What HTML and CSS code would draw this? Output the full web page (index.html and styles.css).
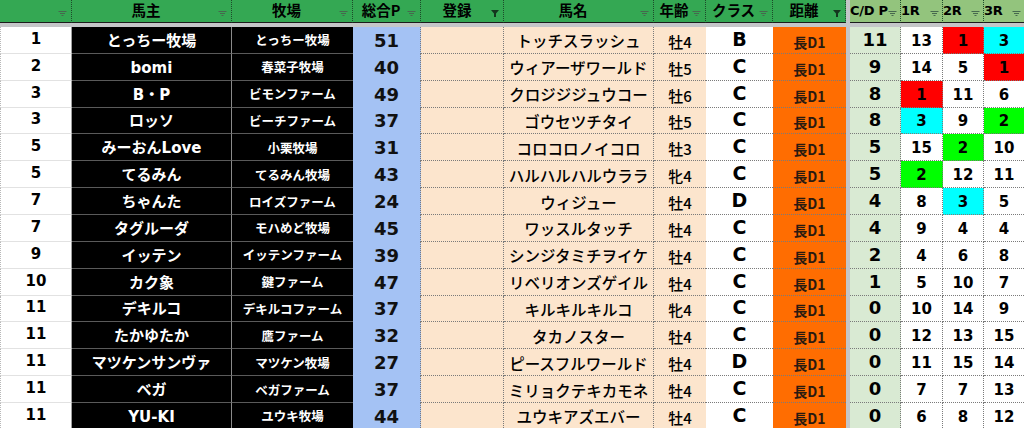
FILE: index.html
```html
<!DOCTYPE html>
<html lang="ja">
<head>
<meta charset="utf-8">
<title>ランキング</title>
<link rel="stylesheet" href="styles.css">
</head>
<body>
<div class="sheet">
  <div class="row head">
    <div class="h c-rank"><span></span><svg class="flt" viewBox="0 0 8 6"><path d="M0 0.5H8M1.5 2.5H6.5M3 4.5H5"/></svg></div>
    <div class="h"><span>馬主</span><svg class="flt" viewBox="0 0 8 6"><path d="M0 0.5H8M1.5 2.5H6.5M3 4.5H5"/></svg></div>
    <div class="h"><span>牧場</span><svg class="flt" viewBox="0 0 8 6"><path d="M0 0.5H8M1.5 2.5H6.5M3 4.5H5"/></svg></div>
    <div class="h"><span>総合P</span><svg class="flt" viewBox="0 0 8 6"><path d="M0 0.5H8M1.5 2.5H6.5M3 4.5H5"/></svg></div>
    <div class="h"><span>登録</span><svg class="flt on" viewBox="0 0 8 7"><path d="M0 0H8L5 3.5V7H3V3.5Z"/></svg></div>
    <div class="h"><span>馬名</span><svg class="flt" viewBox="0 0 8 6"><path d="M0 0.5H8M1.5 2.5H6.5M3 4.5H5"/></svg></div>
    <div class="h"><span>年齢</span><svg class="flt" viewBox="0 0 8 6"><path d="M0 0.5H8M1.5 2.5H6.5M3 4.5H5"/></svg></div>
    <div class="h"><span>クラス</span><svg class="flt" viewBox="0 0 8 6"><path d="M0 0.5H8M1.5 2.5H6.5M3 4.5H5"/></svg></div>
    <div class="h"><span>距離</span><svg class="flt on" viewBox="0 0 8 7"><path d="M0 0H8L5 3.5V7H3V3.5Z"/></svg></div>
    <div class="sep"></div>
    <div class="h lt sm"><span>C/D P</span><svg class="flt" viewBox="0 0 8 6"><path d="M0 0.5H8M1.5 2.5H6.5M3 4.5H5"/></svg></div>
    <div class="h lt sm"><span>1R</span><svg class="flt" viewBox="0 0 8 6"><path d="M0 0.5H8M1.5 2.5H6.5M3 4.5H5"/></svg></div>
    <div class="h lt sm"><span>2R</span><svg class="flt" viewBox="0 0 8 6"><path d="M0 0.5H8M1.5 2.5H6.5M3 4.5H5"/></svg></div>
    <div class="h lt sm last"><span>3R</span><svg class="flt" viewBox="0 0 8 6"><path d="M0 0.5H8M1.5 2.5H6.5M3 4.5H5"/></svg></div>
  </div>
  <div class="band"></div>

  <div class="row"><div class="c rank">1</div><div class="c own">とっちー牧場</div><div class="c farm">とっちー牧場</div><div class="c pt">51</div><div class="c reg"></div><div class="c horse">トッチスラッシュ</div><div class="c age">牡4</div><div class="c cls">B</div><div class="c dist">長D1</div><div class="sep"></div><div class="c cdp">11</div><div class="c r">13</div><div class="c r red">1</div><div class="c r cyan last">3</div></div>
  <div class="row"><div class="c rank">2</div><div class="c own">bomi</div><div class="c farm">春菜子牧場</div><div class="c pt">40</div><div class="c reg"></div><div class="c horse">ウィアーザワールド</div><div class="c age">牡5</div><div class="c cls">C</div><div class="c dist">長D1</div><div class="sep"></div><div class="c cdp">9</div><div class="c r">14</div><div class="c r">5</div><div class="c r red last">1</div></div>
  <div class="row"><div class="c rank">3</div><div class="c own">B・P</div><div class="c farm">ビモンファーム</div><div class="c pt">49</div><div class="c reg"></div><div class="c horse">クロジジジュウコー</div><div class="c age">牡6</div><div class="c cls">C</div><div class="c dist">長D1</div><div class="sep"></div><div class="c cdp">8</div><div class="c r red">1</div><div class="c r">11</div><div class="c r last">6</div></div>
  <div class="row"><div class="c rank">3</div><div class="c own">ロッソ</div><div class="c farm">ビーチファーム</div><div class="c pt">37</div><div class="c reg"></div><div class="c horse">ゴウセツチタイ</div><div class="c age">牡5</div><div class="c cls">C</div><div class="c dist">長D1</div><div class="sep"></div><div class="c cdp">8</div><div class="c r cyan">3</div><div class="c r">9</div><div class="c r green last">2</div></div>
  <div class="row"><div class="c rank">5</div><div class="c own">みーおんLove</div><div class="c farm">小栗牧場</div><div class="c pt">31</div><div class="c reg"></div><div class="c horse">コロコロノイコロ</div><div class="c age">牡3</div><div class="c cls">C</div><div class="c dist">長D1</div><div class="sep"></div><div class="c cdp">5</div><div class="c r">15</div><div class="c r green">2</div><div class="c r last">10</div></div>
  <div class="row"><div class="c rank">5</div><div class="c own">てるみん</div><div class="c farm">てるみん牧場</div><div class="c pt">43</div><div class="c reg"></div><div class="c horse">ハルハルハルウララ</div><div class="c age">牝4</div><div class="c cls">C</div><div class="c dist">長D1</div><div class="sep"></div><div class="c cdp">5</div><div class="c r green">2</div><div class="c r">12</div><div class="c r last">11</div></div>
  <div class="row"><div class="c rank">7</div><div class="c own">ちゃんた</div><div class="c farm">ロイズファーム</div><div class="c pt">24</div><div class="c reg"></div><div class="c horse">ウィジュー</div><div class="c age">牡4</div><div class="c cls">D</div><div class="c dist">長D1</div><div class="sep"></div><div class="c cdp">4</div><div class="c r">8</div><div class="c r cyan">3</div><div class="c r last">5</div></div>
  <div class="row"><div class="c rank">7</div><div class="c own">タグルーダ</div><div class="c farm">モハめど牧場</div><div class="c pt">45</div><div class="c reg"></div><div class="c horse">ワッスルタッチ</div><div class="c age">牡4</div><div class="c cls">C</div><div class="c dist">長D1</div><div class="sep"></div><div class="c cdp">4</div><div class="c r">9</div><div class="c r">4</div><div class="c r last">4</div></div>
  <div class="row"><div class="c rank">9</div><div class="c own">イッテン</div><div class="c farm">イッテンファーム</div><div class="c pt">39</div><div class="c reg"></div><div class="c horse">シンジタミチヲイケ</div><div class="c age">牡4</div><div class="c cls">C</div><div class="c dist">長D1</div><div class="sep"></div><div class="c cdp">2</div><div class="c r">4</div><div class="c r">6</div><div class="c r last">8</div></div>
  <div class="row"><div class="c rank">10</div><div class="c own">カク象</div><div class="c farm">鍵ファーム</div><div class="c pt">47</div><div class="c reg"></div><div class="c horse">リベリオンズゲイル</div><div class="c age">牡4</div><div class="c cls">C</div><div class="c dist">長D1</div><div class="sep"></div><div class="c cdp">1</div><div class="c r">5</div><div class="c r">10</div><div class="c r last">7</div></div>
  <div class="row"><div class="c rank">11</div><div class="c own">デキルコ</div><div class="c farm">デキルコファーム</div><div class="c pt">37</div><div class="c reg"></div><div class="c horse">キルキルキルコ</div><div class="c age">牝4</div><div class="c cls">C</div><div class="c dist">長D1</div><div class="sep"></div><div class="c cdp">0</div><div class="c r">10</div><div class="c r">14</div><div class="c r last">9</div></div>
  <div class="row"><div class="c rank">11</div><div class="c own">たかゆたか</div><div class="c farm">鷹ファーム</div><div class="c pt">32</div><div class="c reg"></div><div class="c horse">タカノスター</div><div class="c age">牡4</div><div class="c cls">C</div><div class="c dist">長D1</div><div class="sep"></div><div class="c cdp">0</div><div class="c r">12</div><div class="c r">13</div><div class="c r last">15</div></div>
  <div class="row"><div class="c rank">11</div><div class="c own">マツケンサンヴァ</div><div class="c farm">マツケン牧場</div><div class="c pt">27</div><div class="c reg"></div><div class="c horse">ピースフルワールド</div><div class="c age">牡4</div><div class="c cls">D</div><div class="c dist">長D1</div><div class="sep"></div><div class="c cdp">0</div><div class="c r">11</div><div class="c r">15</div><div class="c r last">14</div></div>
  <div class="row"><div class="c rank">11</div><div class="c own">ベガ</div><div class="c farm">ベガファーム</div><div class="c pt">37</div><div class="c reg"></div><div class="c horse">ミリョクテキカモネ</div><div class="c age">牡4</div><div class="c cls">C</div><div class="c dist">長D1</div><div class="sep"></div><div class="c cdp">0</div><div class="c r">7</div><div class="c r">7</div><div class="c r last">13</div></div>
  <div class="row"><div class="c rank">11</div><div class="c own">YU-KI</div><div class="c farm">ユウキ牧場</div><div class="c pt">44</div><div class="c reg"></div><div class="c horse">ユウキアズエバー</div><div class="c age">牡4</div><div class="c cls">C</div><div class="c dist">長D1</div><div class="sep"></div><div class="c cdp">0</div><div class="c r">6</div><div class="c r">8</div><div class="c r last">12</div></div>
</div>
</body>
</html>
```
FILE: styles.css
```css
html, body {
  margin: 0;
  padding: 0;
  background: #ffffff;
  overflow: hidden;
}
.sheet {
  width: 1024px;
  font-family: "DejaVu Sans", "Noto Sans CJK JP", sans-serif;
  color: #000;
}
.row {
  display: grid;
  grid-template-columns: 72px 160px 121px 68px 83px 150px 52px 67px 73px 4px 51px 42px 41px 40px;
  height: 26.86px;
}
.row.head {
  height: 23px;
}
.band {
  height: 4px;
  background: #c4c6c8;
}
.sep {
  background: #c4c6c8;
}

/* header */
.h {
  box-sizing: border-box;
  background: #34a853;
  border-right: 1px dotted #1d4a2a;
  border-bottom: 1px solid #1b1b1b;
  display: grid;
  grid-template-columns: 1fr auto;
  align-items: center;
  padding: 0 4px 0 2px;
  font-family: "Noto Sans CJK JP", sans-serif;
  font-weight: 700;
  font-size: 14.5px;
  line-height: 1;
}
.h span {
  text-align: center;
  padding-bottom: 2px;
}
.h.lt {
  background: #93c47d;
}
.h.sm {
  font-family: "DejaVu Sans", "Noto Sans CJK JP", sans-serif;
  font-size: 13px;
  letter-spacing: -0.3px;
  padding-left: 0;
  padding-right: 3px;
}
.h.sm span {
  text-align: left;
}
.h.last {
  border-right: none;
}
.flt {
  width: 9px;
  height: 6px;
  margin-top: 5px;
  fill: none;
  stroke: #46684e;
  stroke-width: 1.1;
}
.flt.on {
  width: 8px;
  height: 7px;
  fill: #14361e;
  stroke: none;
}

/* data cells */
.c {
  box-sizing: border-box;
  display: flex;
  align-items: flex-end;
  justify-content: center;
  line-height: 1;
  padding-bottom: 5px;
  white-space: nowrap;
  overflow: hidden;
  border-bottom: 1px dotted #7a7a7a;
  border-right: 1px dotted #7a7a7a;
}
.rank {
  background: #fff;
  font-weight: 700;
  font-size: 15px;
  border-left: 1px dotted #b8b8b8;
  border-bottom: 1px solid #e2e2e2;
  border-right: 1px solid #a0a0a0;
  padding-bottom: 6px;
}
.own {
  background: #000;
  color: #fff;
  font-weight: 700;
  font-size: 15px;
  border-bottom: 1px solid #5a5a5a;
  border-right: 1px solid #8a8a8a;
  padding-bottom: 4px;
}
.farm {
  background: #000;
  color: #fff;
  font-weight: 700;
  font-size: 12.5px;
  border-bottom: 1px solid #5a5a5a;
  border-right: none;
  padding-bottom: 5px;
}
.pt {
  background: #a4c2f4;
  font-weight: 700;
  font-size: 18px;
  color: #111;
  border-bottom: none;
  padding-bottom: 4px;
}
.reg {
  background: #fce5cd;
}
.horse {
  background: #fce5cd;
  font-family: "Noto Sans CJK JP", sans-serif;
  font-weight: 500;
  font-size: 15.5px;
  color: #000;
  padding-bottom: 4px;
}
.age {
  background: #fce5cd;
  font-family: "Noto Sans CJK JP", sans-serif;
  font-weight: 500;
  font-size: 15px;
  color: #000;
  border-right: none;
  padding-bottom: 4px;
}
.cls {
  background: #fff;
  font-weight: 700;
  font-size: 19px;
  border-right: none;
  padding-bottom: 4px;
}
.dist {
  background: #ff6d01;
  font-family: "Noto Sans CJK JP", sans-serif;
  font-weight: 700;
  font-size: 14px;
  color: #2a1a10;
  border-right: none;
  padding-bottom: 4px;
}
.cdp {
  background: #d9ead3;
  font-weight: 700;
  font-size: 18px;
  padding-bottom: 4px;
}
.r {
  background: #fff;
  font-weight: 700;
  font-size: 15px;
  padding-bottom: 4px;
}
.r.red { background: #ff0000; }
.r.cyan { background: #00ffff; }
.r.green { background: #00ff00; }
.c.last { border-right: none; }
```
